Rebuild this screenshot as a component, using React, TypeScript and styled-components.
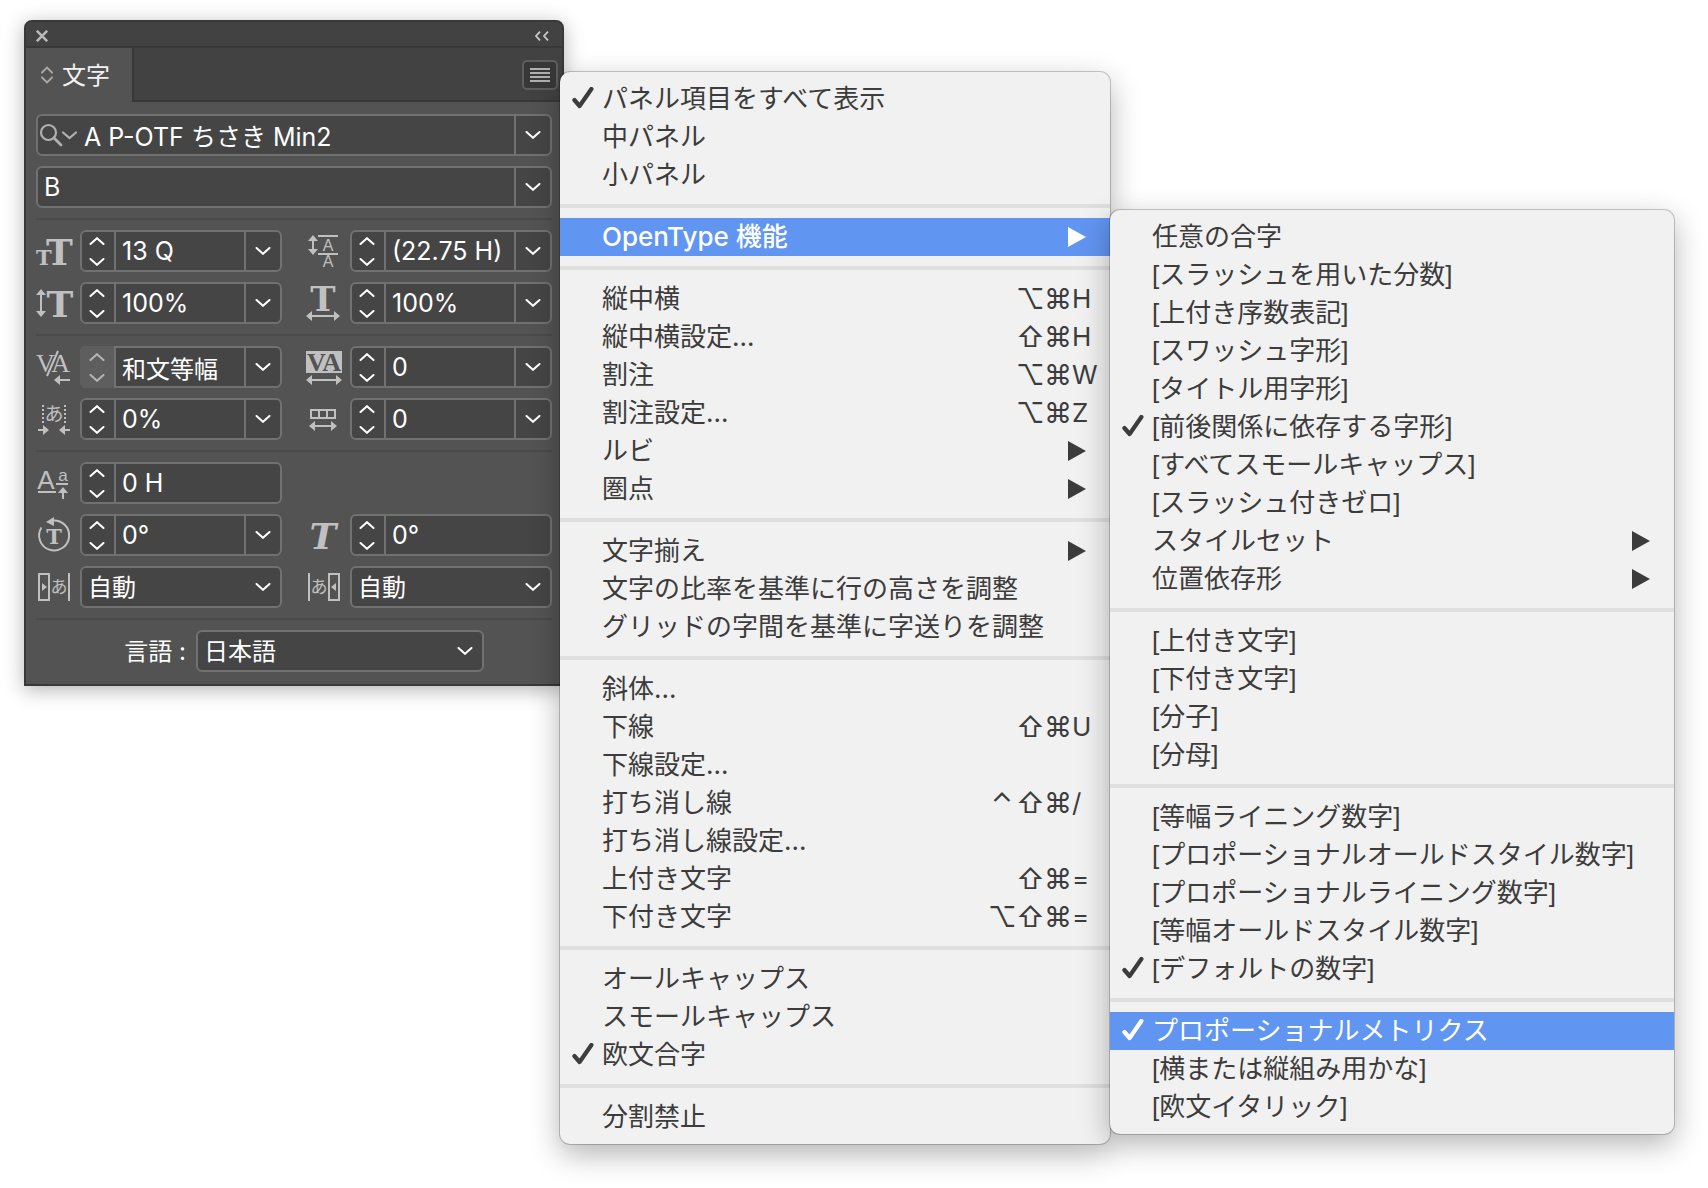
import React from "react";
import styled, { createGlobalStyle, css } from "styled-components";

const jp = `"Noto Sans CJK JP", sans-serif`;

const GlobalStyle = createGlobalStyle`
  *, *::before, *::after { box-sizing: border-box; }
  body { margin: 0; background: #fff; font-family: Inter, ${jp}; }
  button, input, select { font: inherit; color: inherit; margin: 0; }
  button { padding: 0; border: 0; background: none; }
`;

/* ---------- page ---------- */

const Desktop = styled.main`
  min-height: 100vh;
  padding: 20px 24px;
`;

const Workspace = styled.div`
  position: relative;
  max-width: 540px;
`;

/* ---------- panel ---------- */

const Panel = styled.section`
  border: 2px solid #383838;
  border-radius: 8px 8px 0 0;
  background: #535353;
  color: #fff;
  font-size: 24px;
  box-shadow: 0 4px 20px rgba(0, 0, 0, 0.3);
`;

const TitleBar = styled.div`
  display: flex;
  align-items: center;
  justify-content: space-between;
  height: 26px;
  padding: 4px 13px 0 10px;
  border-bottom: 2px solid #383838;
  border-radius: 6px 6px 0 0;
  background: #424242;
`;

const IconButton = styled.button`
  display: flex;
  align-items: center;
  justify-content: center;
`;

const TabBar = styled.div`
  display: flex;
  height: 54px;
`;

const Tab = styled.div`
  display: flex;
  align-items: center;
  gap: 9px;
  width: 106px;
  padding-left: 15px;
  color: #f2f2f2;
`;

const TabTitle = styled.span`
  padding-bottom: 4px;
`;

const TabRest = styled.div`
  display: flex;
  flex: 1;
  align-items: center;
  justify-content: flex-end;
  padding: 2px 4px 0 0;
  border-left: 2px solid #383838;
  border-bottom: 2px solid #383838;
  background: #424242;
`;

const FlyoutButton = styled(IconButton)`
  width: 36px;
  height: 30px;
  border: 2px solid #5e5e5e;
  border-radius: 5px;
  background: #383838;
`;

const PanelBody = styled.div`
  display: flex;
  flex-direction: column;
  gap: 10px;
  padding: 12px 10px;
`;

const Rule = styled.hr`
  width: 100%;
  height: 2px;
  margin: 0;
  border: 0;
  background: #4b4b4b;
`;

const Pair = styled.div`
  display: grid;
  grid-template-columns: 1fr 1fr;
  column-gap: 24px;
`;

const Labelled = styled.div`
  display: grid;
  grid-template-columns: 36px 1fr;
  column-gap: 8px;
  align-items: center;
`;

const IconLabel = styled.label`
  display: block;
  height: 36px;
`;

const Box = styled.div`
  display: flex;
  position: relative;
  min-width: 0;
  height: 42px;
  border: 2px solid #717171;
  border-radius: 6px;
  background: #454545;
`;

const Stepper = styled.div<{ $disabled?: boolean }>`
  display: flex;
  flex: none;
  flex-direction: column;
  justify-content: center;
  gap: 13px;
  width: 34px;
  padding-right: 2px;
  border-right: 2px solid #717171;
  ${(p) =>
    p.$disabled &&
    css`
      width: 36px;
      margin: -2px 0 -2px -2px;
      padding-left: 2px;
      border-radius: 6px 0 0 6px;
      background: #5e5e5e;
      color: #b4b4b4;
    `}
`;

const Value = styled.input<{ $kanji?: boolean }>`
  flex: 1;
  min-width: 0;
  padding: 0 0 0 6px;
  border: 0;
  outline: 0;
  background: transparent;
  font-size: ${(p) => (p.$kanji ? 24 : 25)}px;
`;

const DropButton = styled(IconButton)`
  flex: none;
  width: 36px;
  border-left: 2px solid #717171;
`;

const Select = styled.select`
  appearance: none;
  width: 100%;
  padding: 0 34px 0 6px;
  border: 0;
  outline: 0;
  background: transparent;
`;

const SelectMark = styled.span`
  display: flex;
  position: absolute;
  top: 0;
  right: 0;
  align-items: center;
  width: 34px;
  height: 38px;
  padding-left: 9px;
  pointer-events: none;
`;

const SearchButton = styled(IconButton)`
  flex: none;
  width: 40px;
  color: #b0b0b0;
`;

const Language = styled.div`
  display: grid;
  grid-template-columns: 160px 288px;
  align-items: center;
`;

const LanguageLabel = styled.label`
  padding: 0 10px 4px 0;
  text-align: right;
`;

/* ---------- menus ---------- */

const MenuList = styled.ul`
  position: absolute;
  margin: 0;
  padding: 8px 0;
  border-radius: 10px;
  background: #f1f1f1;
  color: #3c3c3c;
  font-size: 26px;
  line-height: 38px;
  list-style: none;
  white-space: nowrap;
  box-shadow: 0 0 0 1px rgba(0, 0, 0, 0.2), 0 10px 30px rgba(0, 0, 0, 0.3);
`;

const MainMenu = styled(MenuList)`
  top: 52px;
  left: 536px;
  min-width: 550px;
`;

const SubMenu = styled(MenuList)`
  top: -8px;
  left: 100%;
  min-width: 564px;
  font-family: "Liberation Sans", ${jp};
`;

const Entry = styled.li`
  position: relative;
`;

const Separator = styled.li`
  height: 4px;
  margin: 10px 0;
  background: #dfdfdf;
`;

const Item = styled.button<{ $active?: boolean }>`
  display: grid;
  grid-template-columns: 30px 1fr auto;
  align-items: center;
  width: 100%;
  height: 38px;
  padding-left: 12px;
  text-align: left;
  ${(p) =>
    p.$active &&
    css`
      background: #6195f2;
      color: #fff;
    `}
`;

const ItemText = styled.span<{ $strong?: boolean }>`
  font-weight: ${(p) => (p.$strong ? 500 : 400)};
`;

const Arrow = styled.span`
  display: flex;
  padding-right: 24px;
`;

const Shortcut = styled.kbd`
  display: flex;
  font: inherit;
`;

const Modifier = styled.span`
  width: 28px;
  font-size: 28px;
  text-align: center;
`;

const KeyName = styled.span`
  width: 38px;
`;

/* ---------- glyphs ---------- */

const Chevron = ({ up = false }: { up?: boolean }) => (
  <svg width="16" height="8" viewBox="0 0 16 8" fill="none" stroke="currentColor" strokeWidth="2" strokeLinecap="round" display="block">
    <path d={up ? "M1.5 7 8 1.2 14.5 7" : "M1.5 1 8 6.8 14.5 1"} />
  </svg>
);

const Check = () => (
  <svg width="22" height="24" viewBox="0 0 22 24" fill="none" stroke="currentColor" strokeWidth="4.2" strokeLinecap="round" strokeLinejoin="round" display="block">
    <path d="M2.4 13 7.6 19 19.4 2" />
  </svg>
);

const Triangle = () => (
  <svg width="18" height="20" viewBox="0 0 18 20" fill="currentColor" display="block">
    <path d="M0 0 18 10 0 20z" />
  </svg>
);

const slab = { fontFamily: "DejaVu Serif", fontWeight: 700, textAnchor: "middle" as const };
const roman = { fontFamily: "Liberation Serif", textAnchor: "middle" as const };
const sans = { fontFamily: "Liberation Sans", textAnchor: "middle" as const };
const kana = { fontFamily: "Noto Sans CJK JP", textAnchor: "middle" as const };
const line = { stroke: "#c0c0c0", strokeWidth: 2, fill: "none" };

const HArrow = ({ y, x1, x2 }: { y: number; x1: number; x2: number }) => (
  <>
    <path {...line} d={`M${x1 + 4} ${y}H${x2 - 4}`} />
    <path d={`M${x1} ${y}l6-5v10zM${x2} ${y}l-6-5v10z`} />
  </>
);

const VArrow = ({ x, y1, y2 }: { x: number; y1: number; y2: number }) => (
  <>
    <path {...line} d={`M${x} ${y1 + 4}V${y2 - 4}`} />
    <path d={`M${x} ${y1}l5 6h-10zM${x} ${y2}l5-6h-10z`} />
  </>
);

const icons = {
  size: (
    <text {...slab} textAnchor="start" x="0" y="32" fontSize="21">
      T
      <tspan x="10" fontSize="36">T</tspan>
    </text>
  ),
  leading: (
    <>
      <VArrow x={7} y1={2} y2={22} />
      <path {...line} d="M12 3h20M12 21h20" />
      <text {...sans} x="22" y="18" fontSize="16">A</text>
      <text {...sans} x="22" y="34" fontSize="16">A</text>
    </>
  ),
  vscale: (
    <>
      <VArrow x={5} y1={4} y2={32} />
      <text {...slab} x="24" y="32" fontSize="36">T</text>
    </>
  ),
  hscale: (
    <>
      <text {...slab} x="17" y="26" fontSize="34">T</text>
      <HArrow y={31} x1={0} x2={34} />
    </>
  ),
  kerning: (
    <>
      <text {...roman} x="17" y="23" fontSize="26">VA</text>
      <path {...line} d="M11 27 22 2" />
      <path {...line} d="M22 31H34" />
      <path d="M18 31l6-5v10z" />
    </>
  ),
  tracking: (
    <>
      <path d="M0 2h36v22H0z" />
      <text {...roman} x="18" y="22" fontSize="26" fontWeight="700" fill="#535353">VA</text>
      <HArrow y={31} x1={0} x2={36} />
    </>
  ),
  tsume: (
    <>
      <path {...line} strokeDasharray="2 2" d="M7 4v19M29 4v19" />
      <text {...kana} x="18" y="20" fontSize="19">あ</text>
      <path {...line} d="M2 29h7M27 29h7" />
      <path d="M13 29l-6-5v10zM23 29l6-5v10z" />
    </>
  ),
  grid: (
    <>
      <path {...line} d="M5 9h24v8H5zM13 9v8M21 9v8" />
      <HArrow y={25} x1={3} x2={31} />
    </>
  ),
  baseline: (
    <>
      <text {...sans} x="10" y="24" fontSize="26">A</text>
      <text {...sans} x="27" y="16" fontSize="17">a</text>
      <path {...line} d="M2 27h18M20 19h12M27 27v7" />
      <path d="M27 22l5 6h-10z" />
    </>
  ),
  rotate: (
    <>
      <path {...line} d="M5.4 10.5A15 15 0 1 0 16 3.6" />
      <path d="M10 5l8-5v9z" />
      <text {...slab} x="18" y="27" fontSize="21">T</text>
    </>
  ),
  skew: <text {...slab} x="17" y="32" fontSize="36" fontStyle="italic">T</text>,
  akiBefore: (
    <>
      <path {...line} d="M3 5h10v26H3zM33 4v28" />
      <path d="M6 14l5 4-5 4z" />
      <text {...kana} x="23" y="24" fontSize="17">あ</text>
    </>
  ),
  akiAfter: (
    <>
      <path {...line} d="M3 4v28M23 5h10v26H23z" />
      <path d="M30 14l-5 4 5 4z" />
      <text {...kana} x="13" y="24" fontSize="17">あ</text>
    </>
  ),
};

const FieldIcon = ({ name }: { name: keyof typeof icons }) => (
  <svg width="36" height="36" viewBox="0 0 36 36" fill="#c0c0c0" overflow="visible" display="block" aria-hidden="true">
    {icons[name]}
  </svg>
);

/* ---------- fields ---------- */

type FieldProps = {
  icon: keyof typeof icons;
  label: string;
  value: string;
  kanji?: boolean;
  stepDisabled?: boolean;
  noMenu?: boolean;
};

const NumberField = ({ icon, label, value, kanji, stepDisabled, noMenu }: FieldProps) => (
  <Labelled>
    <IconLabel htmlFor={icon} aria-label={label}>
      <FieldIcon name={icon} />
    </IconLabel>
    <Box>
      <Stepper $disabled={stepDisabled}>
        <IconButton aria-label={`${label} +`} disabled={stepDisabled}>
          <Chevron up />
        </IconButton>
        <IconButton aria-label={`${label} -`} disabled={stepDisabled}>
          <Chevron />
        </IconButton>
      </Stepper>
      <Value id={icon} aria-label={label} defaultValue={value} $kanji={kanji} />
      {!noMenu && (
        <DropButton aria-label={label}>
          <Chevron />
        </DropButton>
      )}
    </Box>
  </Labelled>
);

const SelectBox = ({ id, label, value }: { id: string; label: string; value: string }) => (
  <Box>
    <Select id={id} aria-label={label} defaultValue={value}>
      <option>{value}</option>
    </Select>
    <SelectMark>
      <Chevron />
    </SelectMark>
  </Box>
);

const SelectField = ({ icon, label, value }: FieldProps) => (
  <Labelled>
    <IconLabel htmlFor={icon} aria-label={label}>
      <FieldIcon name={icon} />
    </IconLabel>
    <SelectBox id={icon} label={label} value={value} />
  </Labelled>
);

/* ---------- menu data ---------- */

type Row = {
  text: string;
  checked?: boolean;
  active?: boolean;
  more?: boolean;
  mods?: string;
  keyName?: string;
  sub?: Row[][];
};

const openType: Row[][] = [
  [
    { text: "任意の合字" },
    { text: "[スラッシュを用いた分数]" },
    { text: "[上付き序数表記]" },
    { text: "[スワッシュ字形]" },
    { text: "[タイトル用字形]" },
    { text: "[前後関係に依存する字形]", checked: true },
    { text: "[すべてスモールキャップス]" },
    { text: "[スラッシュ付きゼロ]" },
    { text: "スタイルセット", more: true },
    { text: "位置依存形", more: true },
  ],
  [{ text: "[上付き文字]" }, { text: "[下付き文字]" }, { text: "[分子]" }, { text: "[分母]" }],
  [
    { text: "[等幅ライニング数字]" },
    { text: "[プロポーショナルオールドスタイル数字]" },
    { text: "[プロポーショナルライニング数字]" },
    { text: "[等幅オールドスタイル数字]" },
    { text: "[デフォルトの数字]", checked: true },
  ],
  [
    { text: "プロポーショナルメトリクス", checked: true, active: true },
    { text: "[横または縦組み用かな]" },
    { text: "[欧文イタリック]" },
  ],
];

const panelMenu: Row[][] = [
  [{ text: "パネル項目をすべて表示", checked: true }, { text: "中パネル" }, { text: "小パネル" }],
  [{ text: "OpenType 機能", active: true, more: true, sub: openType }],
  [
    { text: "縦中横", mods: "⌥⌘", keyName: "H" },
    { text: "縦中横設定...", mods: "⇧⌘", keyName: "H" },
    { text: "割注", mods: "⌥⌘", keyName: "W" },
    { text: "割注設定...", mods: "⌥⌘", keyName: "Z" },
    { text: "ルビ", more: true },
    { text: "圏点", more: true },
  ],
  [
    { text: "文字揃え", more: true },
    { text: "文字の比率を基準に行の高さを調整" },
    { text: "グリッドの字間を基準に字送りを調整" },
  ],
  [
    { text: "斜体..." },
    { text: "下線", mods: "⇧⌘", keyName: "U" },
    { text: "下線設定..." },
    { text: "打ち消し線", mods: "⌃⇧⌘", keyName: "/" },
    { text: "打ち消し線設定..." },
    { text: "上付き文字", mods: "⇧⌘", keyName: "=" },
    { text: "下付き文字", mods: "⌥⇧⌘", keyName: "=" },
  ],
  [{ text: "オールキャップス" }, { text: "スモールキャップス" }, { text: "欧文合字", checked: true }],
  [{ text: "分割禁止" }],
];

const MenuRows = ({ groups }: { groups: Row[][] }) => (
  <>
    {groups.map((rows, g) => (
      <React.Fragment key={g}>
        {g > 0 && <Separator role="separator" />}
        {rows.map((row) => (
          <Entry key={row.text} role="none">
            <Item
              role={row.checked ? "menuitemcheckbox" : "menuitem"}
              aria-checked={row.checked}
              aria-haspopup={row.more ? "menu" : undefined}
              $active={row.active}
            >
              <span>{row.checked && <Check />}</span>
              <ItemText $strong={Boolean(row.sub)}>{row.text}</ItemText>
              {row.more && (
                <Arrow>
                  <Triangle />
                </Arrow>
              )}
              {row.mods && (
                <Shortcut>
                  {[...row.mods].map((m) => (
                    <Modifier key={m}>{m}</Modifier>
                  ))}
                  <KeyName>{row.keyName}</KeyName>
                </Shortcut>
              )}
            </Item>
            {row.sub && (
              <SubMenu role="menu" aria-label={row.text}>
                <MenuRows groups={row.sub} />
              </SubMenu>
            )}
          </Entry>
        ))}
      </React.Fragment>
    ))}
  </>
);

/* ---------- app ---------- */

export default function App() {
  return (
    <>
      <GlobalStyle />
      <Desktop>
        <Workspace>
          <Panel aria-label="文字">
            <TitleBar>
              <IconButton aria-label="閉じる">
                <svg width="12" height="12" viewBox="0 0 12 12" stroke="#b8b8b8" strokeWidth="2.6" display="block">
                  <path d="M.8.8 11.2 11.2M11.2.8.8 11.2" />
                </svg>
              </IconButton>
              <IconButton aria-label="折りたたむ">
                <svg width="15" height="10" viewBox="0 0 15 10" fill="none" stroke="#c8c8c8" strokeWidth="1.8" display="block">
                  <path d="M6 .6 2 5l4 4.4M14 .6 10 5l4 4.4" />
                </svg>
              </IconButton>
            </TitleBar>
            <TabBar>
              <Tab>
                <svg width="12" height="18" viewBox="0 0 12 18" fill="none" stroke="#a8a8a8" strokeWidth="1.8">
                  <path d="M1 7.5V6.5L6 1.6l5 4.9v1M1 10.5v1l5 4.9 5-4.9v-1" />
                </svg>
                <TabTitle>文字</TabTitle>
              </Tab>
              <TabRest>
                <FlyoutButton aria-label="パネルメニュー">
                  <svg width="20" height="14" viewBox="0 0 20 14" stroke="#b0b0b0" strokeWidth="2" display="block">
                    <path d="M0 1h20M0 5h20M0 9h20M0 13h20" />
                  </svg>
                </FlyoutButton>
              </TabRest>
            </TabBar>
            <PanelBody>
              <Box>
                <SearchButton aria-label="フォントを検索">
                  <svg width="38" height="24" viewBox="0 0 38 24" fill="none" stroke="currentColor" strokeWidth="2.2" strokeLinecap="round" display="block">
                    <circle cx="9.5" cy="9.5" r="7.5" />
                    <path d="M15 15l7 7" strokeWidth="2.8" />
                    <path d="M24 9.5l6.5 5.5L37 9.5" />
                  </svg>
                </SearchButton>
                <Value aria-label="フォント" defaultValue="A P-OTF ちさき Min2" />
                <DropButton aria-label="フォント一覧">
                  <Chevron />
                </DropButton>
              </Box>
              <Box>
                <Value aria-label="スタイル" defaultValue="B" />
                <DropButton aria-label="スタイル一覧">
                  <Chevron />
                </DropButton>
              </Box>
              <Rule />
              <Pair>
                <NumberField icon="size" label="フォントサイズ" value="13 Q" />
                <NumberField icon="leading" label="行送り" value="(22.75 H)" />
              </Pair>
              <Pair>
                <NumberField icon="vscale" label="垂直比率" value="100%" />
                <NumberField icon="hscale" label="水平比率" value="100%" />
              </Pair>
              <Rule />
              <Pair>
                <NumberField icon="kerning" label="カーニング" value="和文等幅" kanji stepDisabled />
                <NumberField icon="tracking" label="トラッキング" value="0" />
              </Pair>
              <Pair>
                <NumberField icon="tsume" label="文字ツメ" value="0%" />
                <NumberField icon="grid" label="字取り" value="0" />
              </Pair>
              <Rule />
              <Pair>
                <NumberField icon="baseline" label="ベースラインシフト" value="0 H" noMenu />
              </Pair>
              <Pair>
                <NumberField icon="rotate" label="文字回転" value="0°" />
                <NumberField icon="skew" label="歪み" value="0°" noMenu />
              </Pair>
              <Pair>
                <SelectField icon="akiBefore" label="文字前のアキ量" value="自動" />
                <SelectField icon="akiAfter" label="文字後のアキ量" value="自動" />
              </Pair>
              <Rule />
              <Language>
                <LanguageLabel htmlFor="language">言語 :</LanguageLabel>
                <SelectBox id="language" label="言語" value="日本語" />
              </Language>
            </PanelBody>
          </Panel>
          <MainMenu role="menu" aria-label="パネルメニュー">
            <MenuRows groups={panelMenu} />
          </MainMenu>
        </Workspace>
      </Desktop>
    </>
  );
}
